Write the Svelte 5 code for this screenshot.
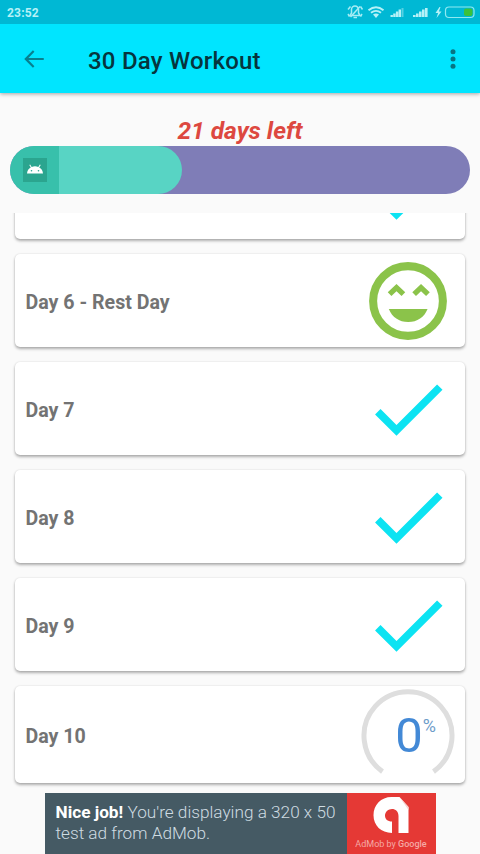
<script>
  const daysLeft = 21;
  const progress = 37.4;

  const days = [
    { label: "", status: "done" },
    { label: "Day 6 - Rest Day", status: "rest" },
    { label: "Day 7", status: "done" },
    { label: "Day 8", status: "done" },
    { label: "Day 9", status: "done" },
    { label: "Day 10", status: "progress", percent: 0 },
  ];
</script>

<main>
  <header>
    <div class="status-bar">
      <span class="clock">23:52</span>
      <svg class="status-icons" viewBox="0 0 130 24">
        <!-- Muted bell -->
        <g fill="none" stroke="#a5ecf4" stroke-width="1.5">
          <path d="M4 15.500h10L12.500 13V9.500a3.500 3.500 0 0 0-7 0V13z" />
          <path d="M4.500 17L14 6.500M2 9.500L4.500 6.500M16.500 9.500L14.500 6.500M2 14l1.500 2.500M16 14l-1.500 2.500M7.500 17.500h3.500" />
        </g>
        <!-- Wifi -->
        <g fill="none" stroke="#b5f1f7" stroke-width="1.9">
          <path d="M22.500 10.200Q30 4.400 37.500 10.200" />
          <path d="M25 12.800Q30 9 35 12.800" />
        </g>
        <path d="M27 14.500Q30 12.500 33 14.500L30 18z" fill="#b5f1f7" />
        <!-- Signal bars -->
        <path
          d="M44.500 17v-2h2.400v2zM47.200 17v-3.500h2.400V17zM49.900 17v-5.500h2.400V17zM52.600 17v-7.500H55V17z"
          fill="#b5f1f7"
        />
        <path d="M55.500 17V8h2v9z" fill="#55d1e2" />
        <path
          d="M67 17v-2h2.600v2zM70 17v-3.500h2.600V17zM73 17v-5.500h2.600V17zM76 17V9.500h2.600V17zM79 17V8h2.600v9z"
          fill="#b5f1f7"
        />
        <!-- Battery -->
        <path d="M93.500 7l-4 6h2.600L90.500 18l5-6.500h-2.600L94.500 7z" fill="#b5f1f7" />
        <rect x="118" y="8.500" width="8.500" height="7.500" rx="2" fill="#3cc13b" />
        <rect
          x="99.500"
          y="7"
          width="28.500"
          height="10.500"
          rx="3.500"
          fill="none"
          stroke="#8ee9f1"
          stroke-width="1.200"
        />
      </svg>
    </div>
    <div class="toolbar">
      <svg class="back" viewBox="0 0 24 24">
        <path
          d="M21 11H6.830l5.580-5.590L11 4l-8 8 8 8 1.410-1.410L6.830 13H21z"
          fill="#087f8f"
        />
      </svg>
      <h1>30 Day Workout</h1>
      <svg class="more" viewBox="0 0 8 24" fill="#087482">
        <circle cx="4" cy="4.700" r="2.500" />
        <circle cx="4" cy="12" r="2.500" />
        <circle cx="4" cy="19.300" r="2.500" />
      </svg>
    </div>
  </header>

  <section class="summary">
    <p class="days-left">{daysLeft} days left</p>
    <div class="progress-track">
      <div class="progress-fill" style="width: {progress}%">
        <div class="progress-icon">
          <svg viewBox="0 0 24 24">
            <rect width="24" height="24" fill="#2ba58f" />
            <path
              d="M4 15.500c.2-3 1.600-5 3.800-6L6.300 7l.8-.5L8.700 9a9 9 0 0 1 6.600 0l1.600-2.500.8.5-1.500 2.500c2.200 1 3.600 3 3.800 6z"
              fill="#fff"
            />
            <circle cx="8.500" cy="12.800" r=".8" fill="#2ba58f" />
            <circle cx="15.500" cy="12.800" r=".8" fill="#2ba58f" />
          </svg>
        </div>
      </div>
    </div>
  </section>

  <section class="day-list">
    {#each days as day}
      <div class="card" class:current={day.status === "progress"}>
        <h2>{day.label}</h2>
        {#if day.status === "done"}
          <svg class="state" viewBox="0 0 24 24">
            <path
              d="M9 16.170L4.830 12l-1.420 1.410L9 19 21 7l-1.410-1.410z"
              fill="#0ce3f2"
            />
          </svg>
        {:else if day.status === "rest"}
          <svg class="state" viewBox="0 0 24 24">
            <circle
              cx="12"
              cy="12"
              r="9.100"
              fill="none"
              stroke="#8bc34a"
              stroke-width="2.100"
            />
            <path
              d="M7.200 10.200L9 8.500l1.800 1.700M13.600 10.200l1.800-1.700 1.800 1.700"
              fill="none"
              stroke="#8bc34a"
              stroke-width="1.400"
            />
            <path
              d="M7 14.100h10.100c-.8 2.100-2.700 3.400-5.050 3.400s-4.250-1.300-5.050-3.400z"
              fill="#8bc34a"
            />
          </svg>
        {:else}
          <div class="gauge">
            <svg viewBox="0 0 94 94">
              <path
                d="M21.500 82.600A44 44 0 1 1 72.500 82.600"
                fill="none"
                stroke="#dedede"
                stroke-width="5"
              />
            </svg>
            <span class="value">{day.percent}<sup>%</sup></span>
          </div>
        {/if}
      </div>
    {/each}
  </section>

  <footer>
    <div class="ad">
      <p><b>Nice job!</b> You're displaying a 320 x 50<br />test ad from AdMob.</p>
      <div class="admob">
        <svg viewBox="0 0 38 38">
          <path
            d="M19 1h8l9 10v26H26V20c0-4.500-3-7-6.500-7s-7 2.800-7 6.500 2.500 6 7 6V37C8.500 37 1 29.500 1 19.300 1 9 8.500 1 19 1z"
            fill="#fff"
          />
          <path d="M27 1l9 10v3z" fill="#f6cfcd" />
        </svg>
        <span>AdMob by <b>Google</b></span>
      </div>
    </div>
  </footer>
</main>

<style>
  :global(body) {
    margin: 0;
    background: #fafafa;
  }

  * {
    box-sizing: border-box;
  }

  h1,
  h2,
  p {
    margin: 0;
  }

  svg {
    display: block;
  }

  main {
    display: flex;
    flex-direction: column;
    height: 854px;
    overflow: hidden;
    font-family: Roboto, "Liberation Sans", sans-serif;
    background: #fafafa;
  }

  /* Header */
  header {
    flex: none;
    background: #00e5ff;
    box-shadow: 0 1px 4px rgba(0, 0, 0, 0.35);
  }

  .status-bar {
    display: flex;
    align-items: center;
    justify-content: space-between;
    height: 24px;
    padding: 0 4px 0 7px;
    background: #00b8d4;
  }

  .clock {
    padding-top: 1px;
    font-size: 12px;
    font-weight: 700;
    letter-spacing: 0.2px;
    color: #b5f1f7;
  }

  .status-icons {
    width: 130px;
    height: 24px;
  }

  .toolbar {
    display: flex;
    align-items: center;
    height: 69px;
    padding: 0 23px 0 21px;
  }

  .back {
    width: 26px;
    height: 26px;
  }

  h1 {
    flex: 1;
    margin-left: 41px;
    padding-top: 4px;
    font-size: 24px;
    font-weight: 500;
    letter-spacing: 0.22px;
    color: #06353d;
  }

  .more {
    width: 8px;
    height: 24px;
  }

  /* Progress */
  .summary {
    flex: none;
    padding: 23px 10px 0;
  }

  .days-left {
    height: 30px;
    font-size: 24.5px;
    line-height: 30px;
    font-weight: 700;
    font-style: italic;
    text-align: center;
    color: #dd4840;
  }

  .progress-track {
    height: 48px;
    border-radius: 24px;
    background: #7f7db7;
    overflow: hidden;
  }

  .progress-fill {
    height: 100%;
    border-radius: 24px;
    background: #58d4c4;
    overflow: hidden;
  }

  .progress-icon {
    display: flex;
    align-items: center;
    justify-content: center;
    width: 49px;
    height: 100%;
    background: #38c0ab;
  }

  .progress-icon svg {
    width: 24px;
    height: 24px;
  }

  /* Day list */
  .day-list {
    display: flex;
    flex: none;
    flex-direction: column;
    justify-content: flex-end;
    gap: 15px;
    height: 579px;
    margin-top: 19px;
    padding: 0 15px 9px;
    overflow: hidden;
  }

  .card {
    display: flex;
    flex: none;
    align-items: center;
    justify-content: space-between;
    height: 93px;
    padding: 0 11px 0 10.5px;
    border-radius: 5px;
    background: #fff;
    box-shadow:
      0 2px 3px rgba(0, 0, 0, 0.3),
      0 0 2px rgba(0, 0, 0, 0.12);
  }

  .card.current {
    height: 97px;
    padding-right: 10px;
  }

  h2 {
    padding-top: 3px;
    font-size: 19.6px;
    font-weight: 700;
    color: #737373;
  }

  .state {
    width: 92px;
    height: 92px;
  }

  .gauge {
    display: grid;
    place-items: center;
    margin-top: 3px;
  }

  .gauge svg,
  .value {
    grid-area: 1 / 1;
  }

  .gauge svg {
    width: 94px;
    height: 94px;
  }

  .value {
    display: flex;
    padding-left: 15px;
    font-size: 49px;
    line-height: 50px;
    color: #4389d6;
  }

  sup {
    padding-top: 5px;
    font-size: 18px;
    line-height: 20px;
    color: #6d9cc9;
  }

  /* Ad banner */
  footer {
    display: flex;
    flex: none;
    justify-content: center;
    height: 62px;
  }

  .ad {
    display: flex;
    width: 391px;
    height: 100%;
    margin-top: 1px;
    background: #455a64;
  }

  .ad p {
    flex: 1;
    padding: 9px 0 0 11px;
    font-size: 17.2px;
    line-height: 20.5px;
    font-weight: 300;
    white-space: nowrap;
    color: #cfdce2;
  }

  .ad p b {
    font-weight: 700;
    color: #fff;
  }

  .admob {
    display: flex;
    flex-direction: column;
    align-items: center;
    width: 89px;
    padding-top: 3px;
    background: #e53935;
  }

  .admob svg {
    width: 39px;
    height: 38px;
  }

  .admob span {
    margin-top: 4px;
    font-size: 9px;
    line-height: 12px;
    white-space: nowrap;
    color: #f5a9a5;
  }

  .admob b {
    font-weight: 500;
  }
</style>
